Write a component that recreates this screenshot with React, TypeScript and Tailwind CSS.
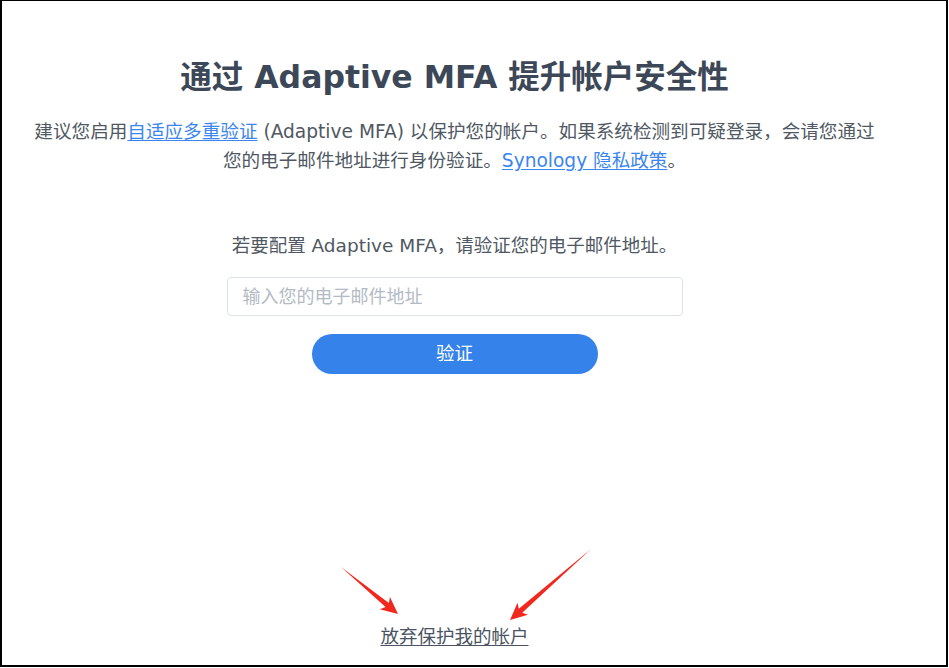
import React from "react";

const font = { fontFamily: '"DejaVu Sans", "Noto Sans CJK SC", sans-serif' };

// tapered red arrow, thin at the tail and widening into a head at the tip
const arrowPoints = (tx: number, ty: number, hx: number, hy: number) => {
  const dx = hx - tx;
  const dy = hy - ty;
  const len = Math.hypot(dx, dy);
  const ux = dx / len;
  const uy = dy / len;
  const nx = -uy;
  const ny = ux;
  const headLen = 17;
  const headW = 8;
  const shaftW = 2.6;
  const bx = hx - ux * headLen;
  const by = hy - uy * headLen;
  const pts = [
    [tx, ty],
    [bx + nx * shaftW + ux * 3, by + ny * shaftW + uy * 3],
    [bx + nx * headW, by + ny * headW],
    [hx, hy],
    [bx - nx * headW, by - ny * headW],
    [bx - nx * shaftW + ux * 3, by - ny * shaftW + uy * 3],
  ];
  return pts.map((p) => p.join(",")).join(" ");
};

export default function App() {
  return (
    <div className="relative w-[949px] h-[668px] bg-white" style={font}>
      <div className="w-[948px] h-[667px] border-t border-l-2 border-r-2 border-b-2 border-black box-border">
        <div className="flex flex-col items-center w-[905px] h-full text-center">
          <h1 className="mt-[56px] text-[31.5px] leading-[40px] font-bold text-[#3c4757]">
            通过 Adaptive MFA 提升帐户安全性
          </h1>
          <p className="mt-[20px] text-[18.6px] leading-[29px] text-[#4f5863] whitespace-nowrap">
            建议您启用
            <a href="#" className="text-[#3b86ee] underline underline-offset-2">
              自适应多重验证
            </a>{" "}
            (Adaptive MFA) 以保护您的帐户。如果系统检测到可疑登录，会请您通过
            <br />
            您的电子邮件地址进行身份验证。
            <a href="#" className="text-[#3b86ee] underline underline-offset-2">
              Synology 隐私政策
            </a>
            。
          </p>
          <p className="mt-[56px] text-[18.5px] leading-[29px] text-[#4f5863] whitespace-nowrap">
            若要配置 Adaptive MFA，请验证您的电子邮件地址。
          </p>
          <input
            type="text"
            placeholder="输入您的电子邮件地址"
            className="mt-[17px] w-[456px] h-[39px] px-[15px] rounded-[4px] border border-[#dce2ea] text-[18px] text-[#4f5863] placeholder:text-[#b3bac4] outline-none"
            style={font}
          />
          <button className="mt-[18px] w-[286px] h-[40px] rounded-full bg-[#3482ea] text-white text-[18.5px]">
            验证
          </button>
          <a
            href="#"
            className="mt-auto mb-[14px] text-[18.5px] leading-[29px] text-[#4a5361] underline underline-offset-2"
          >
            放弃保护我的帐户
          </a>
        </div>
      </div>
      <svg className="absolute inset-0 pointer-events-none" width="949" height="668">
        <polygon points={arrowPoints(341, 567, 398, 614)} fill="#f0281e" />
        <polygon points={arrowPoints(591, 549, 510, 620)} fill="#f0281e" />
      </svg>
    </div>
  );
}
